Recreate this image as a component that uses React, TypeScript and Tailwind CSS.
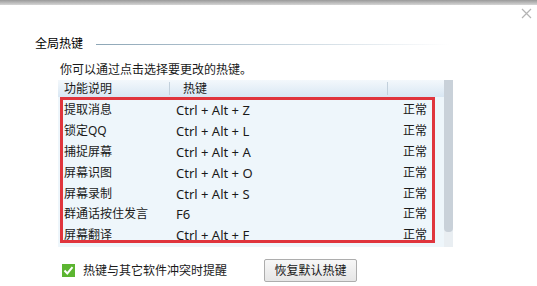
import React from 'react'

const ROWS = [
  { name: '提取消息', key: 'Ctrl + Alt + Z' },
  { name: '锁定QQ', key: 'Ctrl + Alt + L' },
  { name: '捕捉屏幕', key: 'Ctrl + Alt + A' },
  { name: '屏幕识图', key: 'Ctrl + Alt + O' },
  { name: '屏幕录制', key: 'Ctrl + Alt + S' },
  { name: '群通话按住发言', key: 'F6' },
  { name: '屏幕翻译', key: 'Ctrl + Alt + F' },
]

const FONT = "font-['Segoe_UI','Noto_Sans','Noto_Sans_CJK_SC',sans-serif]"

const App: React.FC = () => {
  return (
    <div className={`relative w-[537px] h-[286px] overflow-hidden bg-white text-[12px] text-[#1a1a1a] ${FONT}`}>
      {/* background window strip */}
      <div className="h-[5px] bg-gradient-to-b from-[#9a9a9a] to-[#d6d6d6]" />

      {/* close */}
      <svg className="absolute top-[8px] right-[5px]" width="11" height="11" viewBox="0 0 11 11">
        <path d="M1 1 L10 10 M10 1 L1 10" stroke="#b4b4b4" strokeWidth="1.2" />
      </svg>

      <div className="flex flex-col pl-[35px] pt-[31px]">
        {/* title */}
        <div className="flex items-center h-[16px] leading-[16px]">
          <span className="text-black">全局热键</span>
          <div className="ml-[13px] h-px w-[354px] bg-gradient-to-r from-[#8da6b6] via-[#c4d2dc] to-white" />
        </div>

        <div className="mt-[10px] ml-[25px] h-[16px] leading-[16px]">你可以通过点击选择要更改的热键。</div>

        {/* table */}
        <div className="relative mt-[2px] ml-[23px] w-[395px] h-[167px] flex bg-[#eef6fb]">
          <div className="flex-1 flex flex-col">
            <div className="h-[17px] flex items-center bg-gradient-to-b from-[#f3f8fc] to-[#d9e7f3]">
              <div className="w-[112px] pl-[6px] border-r border-[#c2d0dc] h-[13px] leading-[13px]">功能说明</div>
              <div className="w-[218px] pl-[13px] border-r border-[#c2d0dc] h-[13px] leading-[13px]">热键</div>
              <div className="flex-1" />
            </div>
            <div className="pt-[3px] flex flex-col overflow-hidden h-[150px]">
              {ROWS.map(r => (
                <div key={r.name} className="h-[20.8px] shrink-0 flex items-center leading-[16px]">
                  <div className="w-[118px] pl-[6px]">{r.name}</div>
                  <div className="w-[227px] text-[13px]">{r.key}</div>
                  <div>正常</div>
                </div>
              ))}
            </div>
          </div>
          {/* scrollbar */}
          <div className="w-[9px] bg-[#e9eef2] flex flex-col pb-[15px]">
            <div className="flex-1 rounded-b-[4px] bg-[#c9d1d9]" />
          </div>

          {/* highlight annotation */}
          <div className="absolute left-[2px] top-[17px] w-[375px] h-[146px] border-[3px] border-[#e0353d]" />
        </div>

        {/* footer */}
        <div className="mt-[12px] ml-[27px] flex items-center">
          <svg width="13" height="13" viewBox="0 0 13 13">
            <rect x="0" y="0" width="13" height="13" fill="#5cb531" />
            <path d="M2.5 6.5 L5.3 9.5 L10.5 3.2" stroke="white" strokeWidth="2" fill="none" />
          </svg>
          <span className="ml-[8px]">热键与其它软件冲突时提醒</span>
          <button className="ml-[37px] w-[93px] h-[23px] border border-[#adadad] rounded-[2px] bg-gradient-to-b from-[#f7f7f7] to-[#e6e6e6] leading-[16px]">
            恢复默认热键
          </button>
        </div>
      </div>
    </div>
  )
}

export default App
